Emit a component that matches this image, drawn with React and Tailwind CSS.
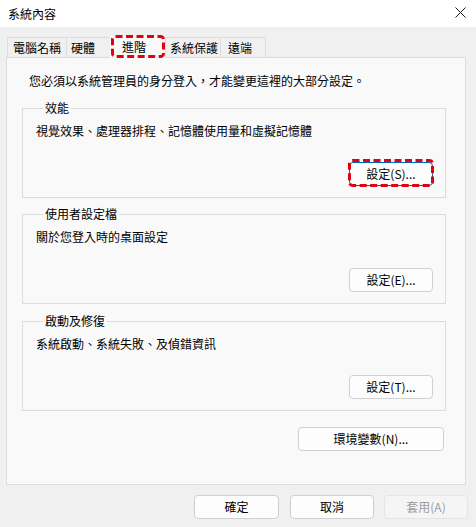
import React from "react"

const font = { fontFamily: '"Noto Sans CJK TC", "Noto Sans", sans-serif' }

function DashBox() {
  // red dashed annotation drawn over a control
  return (
    <svg className="absolute inset-0 w-full h-full overflow-visible pointer-events-none">
      <rect x="1.5" y="1.5" width="calc(100% - 3px)" height="calc(100% - 3px)" rx="3"
        fill="none" stroke="#e3000f" strokeWidth="3" strokeDasharray="7 3.5" />
    </svg>
  )
}

function Btn({ children, className = "", disabled = false, focused = false }) {
  return (
    <button
      className={`h-6 rounded-[4px] border text-[12px] leading-none ${
        disabled
          ? "bg-[#f5f5f5] border-[#e5e5e5] text-[#9d9d9d]"
          : focused
          ? "bg-[#fdfdfd] border-[#0067c0] text-black"
          : "bg-[#fdfdfd] border-[#d0d0d0] text-black"
      } ${className}`}
    >
      {children}
    </button>
  )
}

function Group({ title, text, btn, highlight = false }) {
  return (
    <fieldset className="border border-[#dcdcdc] rounded-none px-[12px] pb-[11px]">
      <legend className="ml-[8px] px-[2px] text-[12px] leading-[14px] text-black">{title}</legend>
      <div className="mt-2 text-[12px] leading-4 text-black pl-[1px]">{text}</div>
      <div className="mt-[21px] flex justify-end">
        <div className="relative">
          <Btn className="w-[84px]" focused={highlight}>{btn}</Btn>
          {highlight && <div className="absolute -inset-[1px]"><DashBox /></div>}
        </div>
      </div>
    </fieldset>
  )
}

export default function App() {
  const tabs = [
    { label: "電腦名稱", cls: "w-[60px] justify-center" },
    { label: "硬體", cls: "w-[45px] pl-[4px]" },
    { label: "進階", cls: "w-[55px] pl-[12px]", active: true },
    { label: "系統保護", cls: "w-[56px] pl-[4px]" },
    { label: "遠端", cls: "w-[46px] pl-[7px]" },
  ]

  return (
    <div className="w-[476px] h-[527px] bg-[#f0f0f0] flex flex-col text-black" style={font}>
      {/* Title bar */}
      <div className="h-[27px] bg-white flex items-center justify-between pl-[8px] pr-[10px]">
        <span className="text-[12px] leading-none">系統內容</span>
        <svg width="11" height="11" viewBox="0 0 11 11" className="mt-[-2px]">
          <path d="M0.5 0.5 L10.5 10.5 M10.5 0.5 L0.5 10.5" stroke="#1a1a1a" strokeWidth="1" />
        </svg>
      </div>

      {/* Tabs */}
      <div className="flex items-end pl-[7px] mt-[10px] h-[20px]">
        {tabs.map((t) =>
          t.active ? (
            <div key={t.label}
              className={`relative flex items-center h-[22px] mb-[-1px] bg-[#f9f9f9] text-[12px] z-10 ${t.cls}`}>
              {t.label}
              <div className="absolute left-[1px] right-0 top-[-1px] bottom-0"><DashBox /></div>
            </div>
          ) : (
            <div key={t.label}
              className={`flex items-center h-[20px] border border-b-0 border-[#dcdcdc] -mr-[1px] bg-[#f0f0f0] text-[12px] ${t.cls}`}>
              {t.label}
            </div>
          )
        )}
      </div>

      {/* Panel */}
      <div className="ml-[6px] w-[460px] h-[428px] bg-[#f9f9f9] border border-[#dcdcdc] pt-[15px] pl-[15px] pr-[19px]">
        <div className="pl-[7px] text-[12px] leading-4">您必須以系統管理員的身分登入，才能變更這裡的大部分設定。</div>
        <div className="mt-3">
          <Group title="效能" text="視覺效果、處理器排程、記憶體使用量和虛擬記憶體" btn="設定(S)..." highlight />
        </div>
        <div className="mt-[9px]">
          <Group title="使用者設定檔" text="關於您登入時的桌面設定" btn="設定(E)..." />
        </div>
        <div className="mt-[10px]">
          <Group title="啟動及修復" text="系統啟動、系統失敗、及偵錯資訊" btn="設定(T)..." />
        </div>
        <div className="mt-4 flex justify-end pr-[2px]">
          <Btn className="w-[146px]">環境變數(N)...</Btn>
        </div>
      </div>

      {/* Dialog buttons */}
      <div className="mt-[10px] flex justify-end pr-[8px]">
        <Btn className="w-[85px]">確定</Btn>
        <Btn className="w-[84px] ml-[11px]">取消</Btn>
        <Btn className="w-[84px] ml-[10px]" disabled>套用(A)</Btn>
      </div>
    </div>
  )
}
